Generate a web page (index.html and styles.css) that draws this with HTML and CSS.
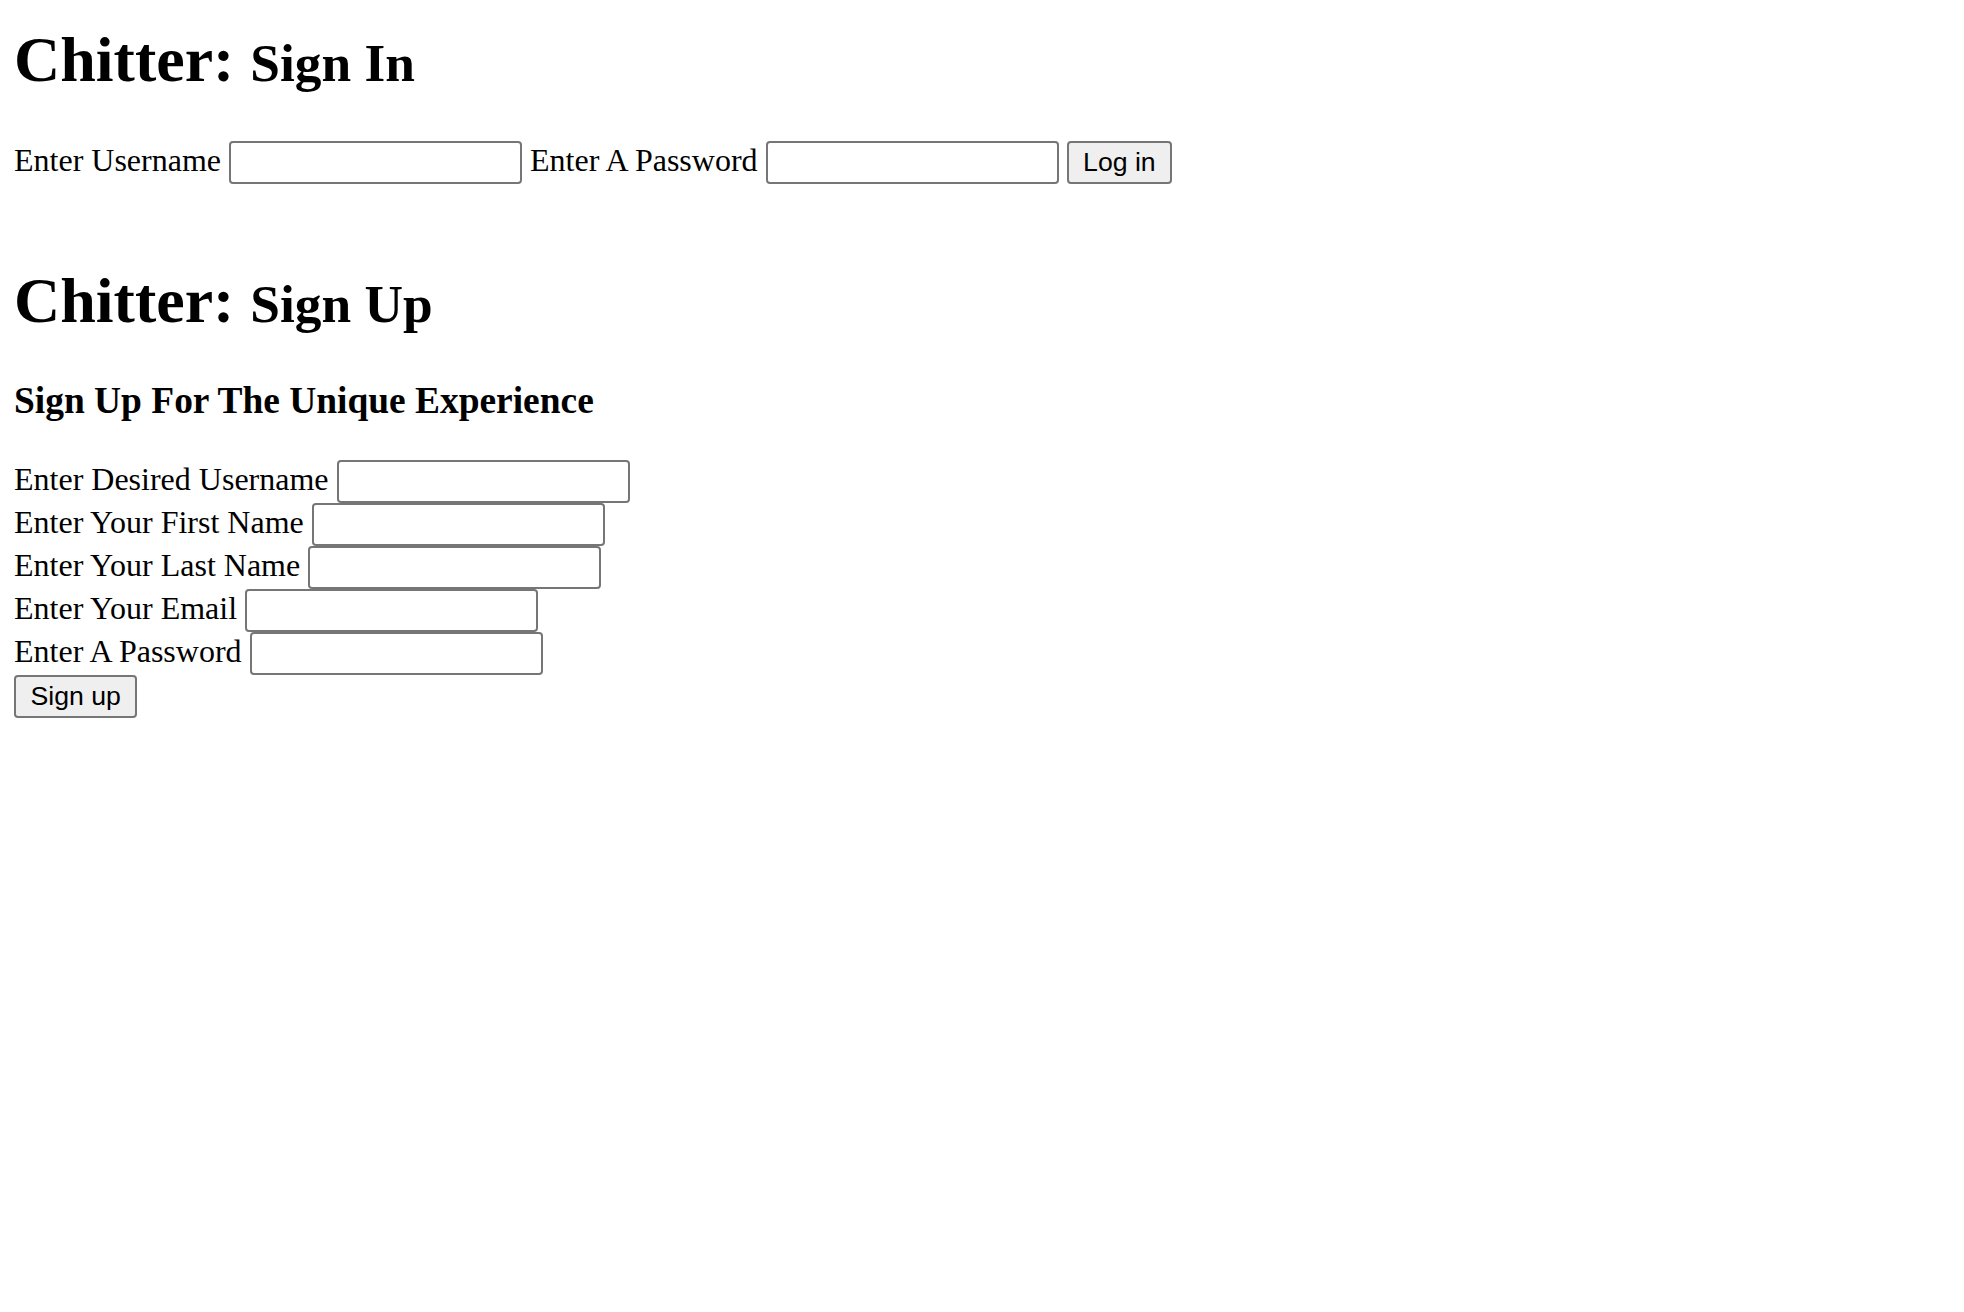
FILE: index.html
```html
<!DOCTYPE html>
<html lang="en">
<head>
<meta charset="utf-8">
<title>Chitter</title>
<link rel="stylesheet" href="styles.css">
</head>
<body>
<main class="page">
  <h1 class="title title-first">Chitter: <small class="title-sub">Sign In</small></h1>
  <form class="login">
    <label class="label" for="login-user">Enter Username</label>
    <input class="field" id="login-user" type="text">
    <label class="label" for="login-pass">Enter A Password</label>
    <input class="field" id="login-pass" type="password">
    <button class="btn" type="button">Log in</button>
  </form>

  <h1 class="title">Chitter: <small class="title-sub">Sign Up</small></h1>
  <h3 class="subtitle">Sign Up For The Unique Experience</h3>
  <form class="signup">
    <div class="row">
      <label class="label" for="su-user">Enter Desired Username</label>
      <input class="field" id="su-user" type="text">
    </div>
    <div class="row">
      <label class="label" for="su-first">Enter Your First Name</label>
      <input class="field" id="su-first" type="text">
    </div>
    <div class="row">
      <label class="label" for="su-last">Enter Your Last Name</label>
      <input class="field" id="su-last" type="text">
    </div>
    <div class="row">
      <label class="label" for="su-email">Enter Your Email</label>
      <input class="field" id="su-email" type="text">
    </div>
    <div class="row">
      <label class="label" for="su-pass">Enter A Password</label>
      <input class="field" id="su-pass" type="password">
    </div>
    <div class="row">
      <button class="btn" type="button">Sign up</button>
    </div>
  </form>
</main>
</body>
</html>
```

FILE: styles.css
```css
html, body {
  margin: 0;
  padding: 0;
  background: #ffffff;
}

body {
  font-family: "Liberation Serif", "Times New Roman", serif;
  font-size: 32px;
  color: #000000;
}

.page {
  padding: 1px 14px 0;
  margin-top: -1px;
}

.title {
  font-size: 64px;
  font-weight: bold;
  line-height: 64px;
  margin: 43px 0;
}

.title-first {
  margin-top: 28px;
  margin-bottom: 45.5px;
}

.title-sub {
  font-size: 53.33px;
}

.subtitle {
  font-size: 37.44px;
  font-weight: bold;
  line-height: 43px;
  margin: 37.44px 0 37.5px;
}

.login {
  display: flex;
  align-items: baseline;
  gap: 8px;
  margin: 0 0 85.5px;
}

.signup {
  display: flex;
  flex-direction: column;
  margin: 0;
}

.row {
  display: flex;
  align-items: baseline;
  gap: 8px;
  height: 43px;
}

.label {
  white-space: nowrap;
}

.field {
  box-sizing: border-box;
  width: 293px;
  height: 43px;
  margin: 0;
  padding: 2px 4px;
  border: 2px solid #767676;
  border-radius: 4px;
  background: #ffffff;
  font-family: "Liberation Sans", Arial, sans-serif;
  font-size: 26.67px;
}

.btn {
  box-sizing: border-box;
  height: 43px;
  margin: 0;
  padding: 0 14.5px;
  border: 2px solid #767676;
  border-radius: 4px;
  background: #efefef;
  color: #000000;
  font-family: "Liberation Sans", Arial, sans-serif;
  font-size: 26.67px;
}
```
